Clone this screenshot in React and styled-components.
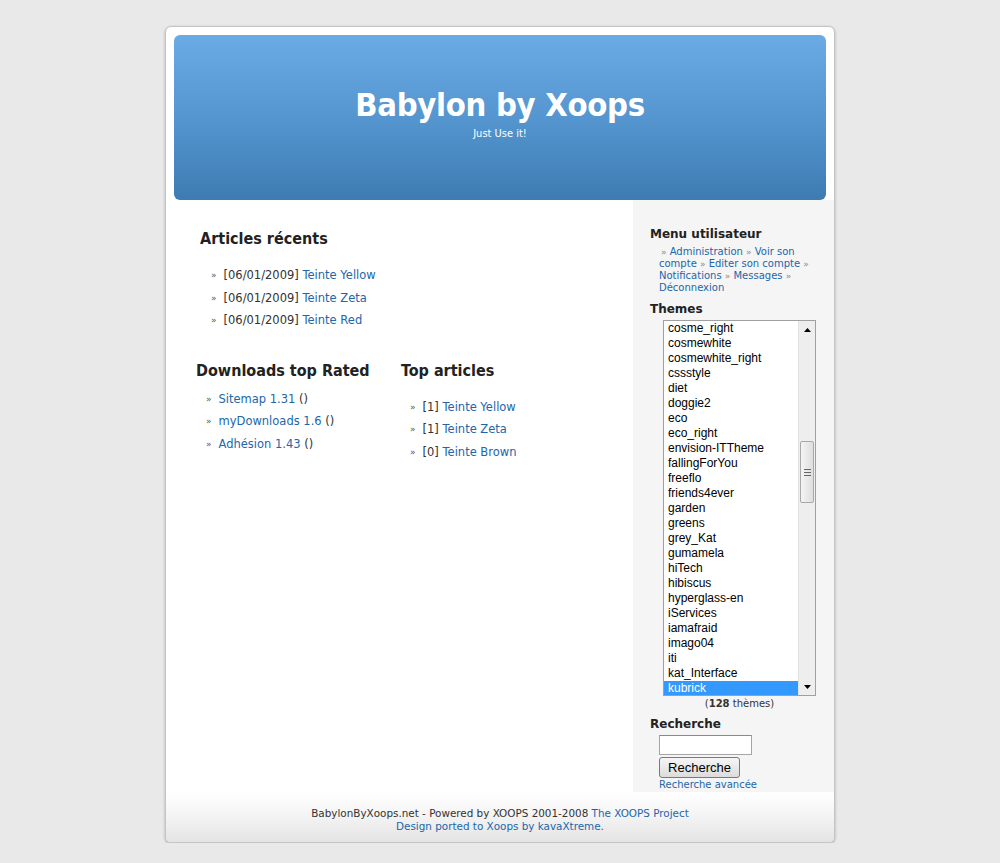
import React from "react";
import styled, { createGlobalStyle } from "styled-components";

const GlobalStyle = createGlobalStyle`
  html, body {
    margin: 0;
    padding: 0;
    background: #e9e9e9;
    font-family: "DejaVu Sans", Verdana, sans-serif;
    color: #333;
  }
`;

const Page = styled.div`
  width: 668px;
  margin: 26px auto 0;
  background: #fff;
  border: 1px solid #c4c4c4;
  border-radius: 6px;
  box-shadow: 0 1px 3px rgba(0, 0, 0, 0.25);
  overflow: hidden;
`;

const HeaderWrap = styled.div`
  padding: 8px 8px 0;
`;

const Header = styled.div`
  height: 165px;
  border-radius: 6px;
  background: linear-gradient(to bottom, #6aabe6 0%, #5596d0 50%, #3d7bb2 100%);
  display: flex;
  flex-direction: column;
  align-items: center;
  padding-top: 52px;
  box-sizing: border-box;
  color: #fff;
`;

const Title = styled.h1`
  margin: 0;
  font-family: "DejaVu Sans Condensed", "DejaVu Sans", sans-serif;
  font-weight: bold;
  font-size: 32.5px;
  line-height: 36px;
  letter-spacing: -0.3px;
`;

const Slogan = styled.div`
  font-family: "DejaVu Sans Condensed", "DejaVu Sans", sans-serif;
  font-size: 11px;
  line-height: 12px;
  margin-top: 5px;
`;

const Main = styled.div`
  display: flex;
`;

const Content = styled.div`
  flex: 1;
  padding-top: 29px;
`;

const Block = styled.div`
  padding-left: ${(p) => p.$indent || 0}px;
`;

const BlockHeading = styled.h2`
  margin: 0;
  font-family: "DejaVu Sans Condensed", "DejaVu Sans", sans-serif;
  font-weight: bold;
  font-size: 16px;
  line-height: 20px;
  color: #222;
`;

const List = styled.ul`
  list-style: none;
  margin: ${(p) => p.$top}px 0 0;
  padding: 0 0 0 ${(p) => p.$pad}px;
`;

const Item = styled.li`
  height: 22.5px;
  font-size: 11.5px;
  line-height: 22.5px;
  color: #333;
  white-space: nowrap;
`;

const Bullet = styled.span`
  display: inline-block;
  font-size: 9px;
  line-height: 1;
  color: #555;
  margin-right: 7px;
  vertical-align: 1px;
`;

const Link = styled.a`
  color: #2266aa;
  text-decoration: none;
`;

const Columns = styled.div`
  display: grid;
  grid-template-columns: 205px 1fr;
  padding-left: 30px;
  margin-top: 29px;
`;

const Sidebar = styled.div`
  width: 201px;
  background: #f5f5f5;
  padding: 27px 0 0 17px;
  box-sizing: border-box;
`;

const SideTitle = styled.div`
  font-weight: bold;
  font-size: 12px;
  line-height: 15px;
  color: #222;
  margin-top: ${(p) => p.$top || 0}px;
`;

const UserMenu = styled.div`
  padding: 4px 0 0 9px;
  width: 154px;
  font-size: 10px;
  line-height: 12px;
  text-indent: 2px;
`;

const Sep = styled.span`
  color: #8a8a8a;
  font-size: 9px;
`;

const ThemeBox = styled.div`
  margin: 3px 0 0 13px;
  width: 153px;
`;

const ListBox = styled.div`
  display: flex;
  height: 376px;
  border: 1px solid #a0a0a0;
  box-sizing: border-box;
  background: #fff;
`;

const Options = styled.div`
  flex: 1;
  overflow: hidden;
`;

const Option = styled.div`
  font-family: "Liberation Sans", Arial, sans-serif;
  font-size: 12px;
  line-height: 15px;
  height: 15px;
  padding-left: 4px;
  color: ${(p) => (p.$selected ? "#fff" : "#000")};
  background: ${(p) => (p.$selected ? "#3399ff" : "transparent")};
`;

const ScrollBar = styled.div`
  width: 16px;
  background: #eeeeee;
  border-left: 1px solid #e2e2e2;
  display: flex;
  flex-direction: column;
`;

const ScrollButton = styled.div`
  height: 17px;
  display: flex;
  align-items: center;
  justify-content: center;
`;

const Track = styled.div`
  flex: 1;
  padding-top: 103px;
`;

const Thumb = styled.div`
  height: 62px;
  margin: 0 1px;
  border: 1px solid #a9a9a9;
  border-radius: 2px;
  background: linear-gradient(to right, #f4f4f4, #dedede);
  box-sizing: border-box;
  display: flex;
  align-items: center;
  justify-content: center;
`;

const Count = styled.div`
  text-align: center;
  font-size: 10px;
  line-height: 15px;
  color: #333;
`;

const SearchForm = styled.div`
  padding: 3px 0 0 9px;
  display: flex;
  flex-direction: column;
  align-items: flex-start;
`;

const Input = styled.input`
  width: 93px;
  height: 20px;
  box-sizing: border-box;
  border: 1px solid #a5a5a5;
  border-top-color: #8a8a8a;
  background: #fff;
  margin: 0;
`;

const Button = styled.button`
  margin-top: 2px;
  width: 81px;
  height: 21px;
  padding: 0;
  border: 1px solid #7a7a7a;
  border-radius: 3px;
  background: linear-gradient(to bottom, #f6f6f6, #dcdcdc);
  font-family: "Liberation Sans", Arial, sans-serif;
  font-size: 13px;
  color: #000;
`;

const Advanced = styled(Link)`
  font-size: 10px;
  line-height: 12px;
  margin-top: 1px;
  margin-bottom: 1px;
`;

const Footer = styled.div`
  background: linear-gradient(to bottom, #ffffff 0%, #f6f6f6 40%, #e4e4e4 100%);
  text-align: center;
  padding: 15px 0 9px;
  font-family: "DejaVu Sans", Verdana, sans-serif;
  font-size: 10.4px;
  line-height: 13px;
  color: #333;
`;

const recent = [
  ["06/01/2009", "Teinte Yellow"],
  ["06/01/2009", "Teinte Zeta"],
  ["06/01/2009", "Teinte Red"],
];

const downloads = ["Sitemap 1.31", "myDownloads 1.6", "Adhésion 1.43"];

const topArticles = [
  ["1", "Teinte Yellow"],
  ["1", "Teinte Zeta"],
  ["0", "Teinte Brown"],
];

const themes = [
  "cosme_right",
  "cosmewhite",
  "cosmewhite_right",
  "cssstyle",
  "diet",
  "doggie2",
  "eco",
  "eco_right",
  "envision-ITTheme",
  "fallingForYou",
  "freeflo",
  "friends4ever",
  "garden",
  "greens",
  "grey_Kat",
  "gumamela",
  "hiTech",
  "hibiscus",
  "hyperglass-en",
  "iServices",
  "iamafraid",
  "imago04",
  "iti",
  "kat_Interface",
  "kubrick",
];

const userLinks = [
  "Administration",
  "Voir son compte",
  "Editer son compte",
  "Notifications",
  "Messages",
  "Déconnexion",
];

const Arrow = ({ down }) => (
  <svg width="7" height="4" viewBox="0 0 7 4">
    <path d={down ? "M0 0H7L3.5 4Z" : "M0 4H7L3.5 0Z"} fill="#000" />
  </svg>
);

const Grip = () => (
  <svg width="7" height="7" viewBox="0 0 7 7">
    <path d="M0 0.5H7M0 3.5H7M0 6.5H7" stroke="#666" strokeWidth="1" />
  </svg>
);

const App = () => {
  return (
    <>
      <GlobalStyle />
      <Page>
        <HeaderWrap>
          <Header>
            <Title>Babylon by Xoops</Title>
            <Slogan>Just Use it!</Slogan>
          </Header>
        </HeaderWrap>
        <Main>
          <Content>
            <Block $indent={34}>
              <BlockHeading>Articles récents</BlockHeading>
              <List $top={15} $pad={11}>
                {recent.map(([date, title]) => (
                  <Item key={title}>
                    <Bullet>»</Bullet>[{date}] <Link href="#">{title}</Link>
                  </Item>
                ))}
              </List>
            </Block>
            <Columns>
              <Block>
                <BlockHeading>Downloads top Rated</BlockHeading>
                <List $top={7} $pad={10}>
                  {downloads.map((d) => (
                    <Item key={d}>
                      <Bullet>»</Bullet>
                      <Link href="#">{d}</Link> ()
                    </Item>
                  ))}
                </List>
              </Block>
              <Block>
                <BlockHeading>Top articles</BlockHeading>
                <List $top={15} $pad={9}>
                  {topArticles.map(([n, title]) => (
                    <Item key={title}>
                      <Bullet>»</Bullet>[{n}] <Link href="#">{title}</Link>
                    </Item>
                  ))}
                </List>
              </Block>
            </Columns>
          </Content>
          <Sidebar>
            <SideTitle>Menu utilisateur</SideTitle>
            <UserMenu>
              {userLinks.map((l, i) => (
                <React.Fragment key={l}>
                  {i > 0 && " "}
                  <Sep>»</Sep> <Link href="#">{l}</Link>
                </React.Fragment>
              ))}
            </UserMenu>
            <SideTitle $top={8}>Themes</SideTitle>
            <ThemeBox>
              <ListBox>
                <Options>
                  {themes.map((t) => (
                    <Option key={t} $selected={t === "kubrick"}>
                      {t}
                    </Option>
                  ))}
                </Options>
                <ScrollBar>
                  <ScrollButton>
                    <Arrow />
                  </ScrollButton>
                  <Track>
                    <Thumb>
                      <Grip />
                    </Thumb>
                  </Track>
                  <ScrollButton>
                    <Arrow down />
                  </ScrollButton>
                </ScrollBar>
              </ListBox>
              <Count>
                (<b>128</b> thèmes)
              </Count>
            </ThemeBox>
            <SideTitle $top={6}>Recherche</SideTitle>
            <SearchForm>
              <Input type="text" />
              <Button type="button">Recherche</Button>
              <Advanced href="#">Recherche avancée</Advanced>
            </SearchForm>
          </Sidebar>
        </Main>
        <Footer>
          BabylonByXoops.net - Powered by XOOPS 2001-2008{" "}
          <Link href="#">The XOOPS Project</Link>
          <br />
          <Link href="#">Design ported to Xoops by kavaXtreme.</Link>
        </Footer>
      </Page>
    </>
  );
};

export default App;
